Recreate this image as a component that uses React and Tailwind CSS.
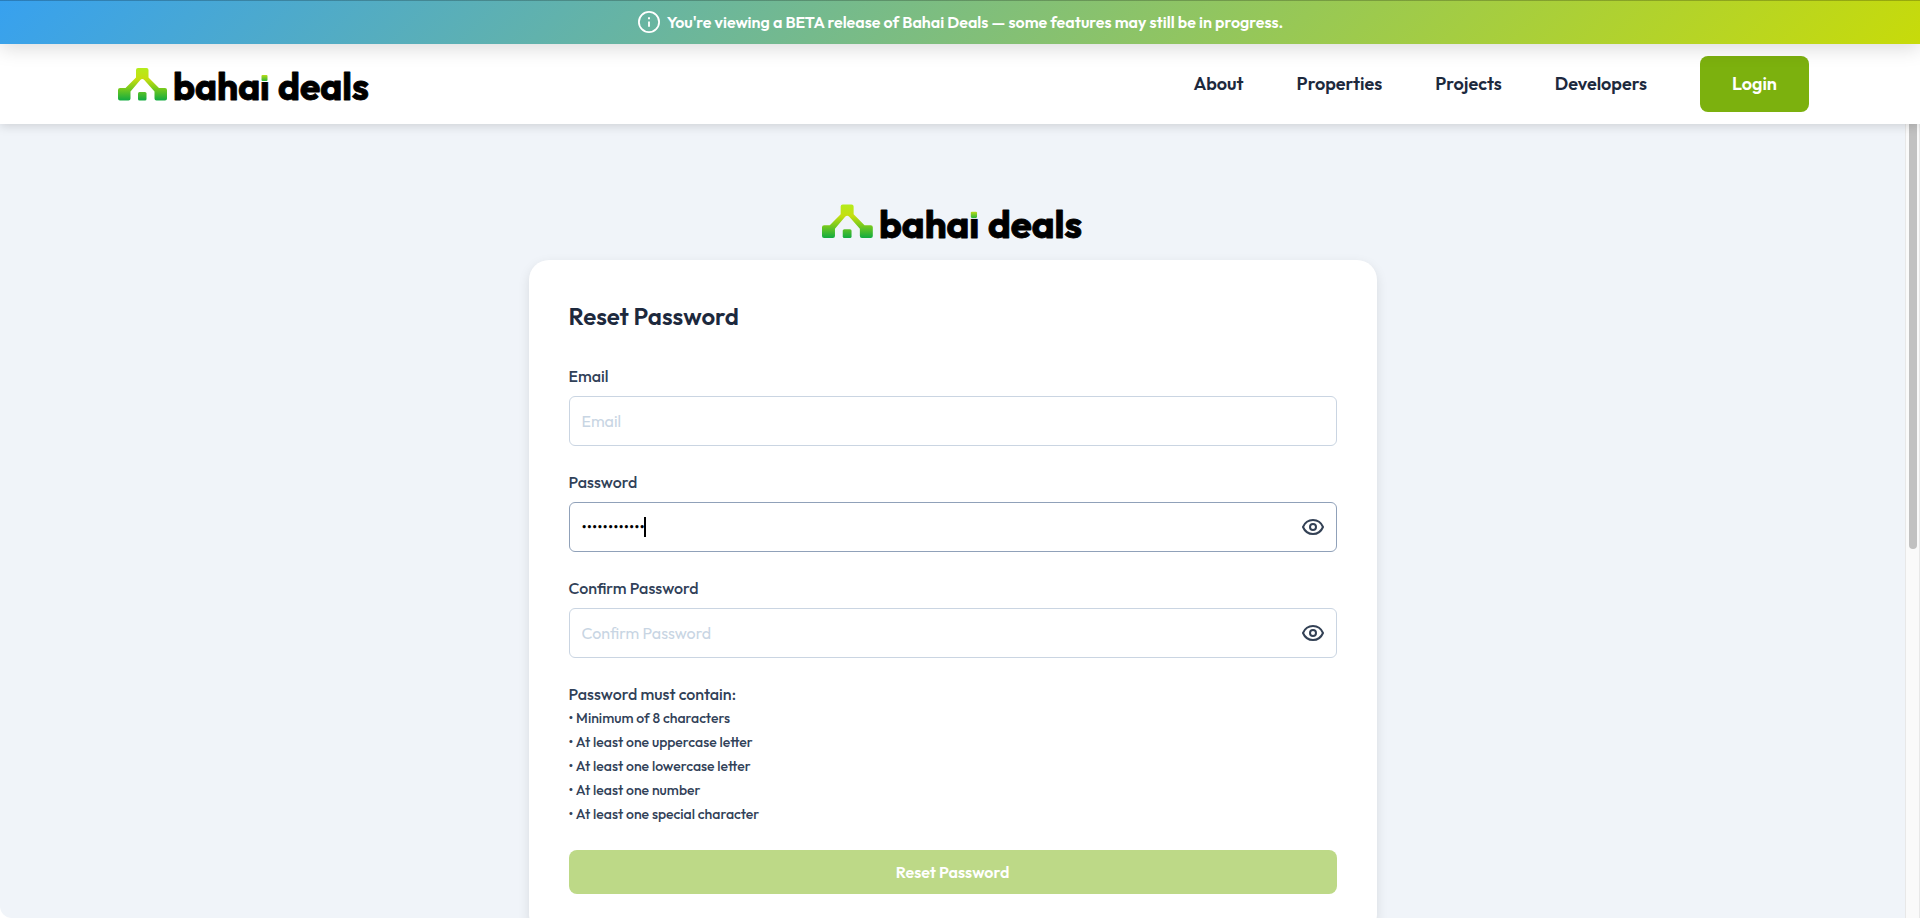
import { useState } from "react";

const requirements = [
  "Minimum of 8 characters",
  "At least one uppercase letter",
  "At least one lowercase letter",
  "At least one number",
  "At least one special character",
];

const links = ["About", "Properties", "Projects", "Developers"];

function Logo({ id, className }) {
  return (
    <svg viewBox="0 -9 252 54" className={className} role="img" aria-label="bahai deals">
      <defs>
        <linearGradient id={`${id}-mark`} gradientUnits="userSpaceOnUse" x1="0" y1="2" x2="0" y2="34">
          <stop offset="0" stopColor="#b4ec1c" />
          <stop offset="0.35" stopColor="#c6de10" />
          <stop offset="0.65" stopColor="#76c91d" />
          <stop offset="1" stopColor="#15ac40" />
        </linearGradient>
        <linearGradient id={`${id}-dot`} x1="0" y1="0" x2="0" y2="1">
          <stop offset="0" stopColor="#b9dc16" />
          <stop offset="1" stopColor="#2fb53a" />
        </linearGradient>
        <linearGradient id={`${id}-stem`} gradientUnits="userSpaceOnUse" x1="0" y1="15.5" x2="0" y2="16">
          <stop offset="0" stopColor="#000" stopOpacity="0" />
          <stop offset="1" stopColor="#000" />
        </linearGradient>
      </defs>
      <g fill={`url(#${id}-mark)`}>
        <path d="M20 2h8.500a2 2 0 0 1 2 2v7.500L41 22H47a2 2 0 0 1 2 2v8.500a2 2 0 0 1-2 2h-8.500a2 2 0 0 1-2-2v-7L26.300 14q-2-2-4 0L12.500 25.500v7a2 2 0 0 1-2 2H2a2 2 0 0 1-2-2V24a2 2 0 0 1 2-2h5.500L18 11.500V4a2 2 0 0 1 2-2z" />
        <rect x="20" y="26" width="8.500" height="8.500" rx="1.500" />
      </g>
      <g className="font-['Outfit',sans-serif] text-[37px] font-bold" stroke="#000" strokeWidth="0.8" strokeLinejoin="round">
        <text x="55" y="34">
          baha<tspan x="142" fill={`url(#${id}-stem)`} stroke={`url(#${id}-stem)`}>i</tspan>
        </text>
        <text x="160" y="34">deals</text>
      </g>
      <rect x="143.500" y="9" width="6" height="6" rx="1" fill={`url(#${id}-dot)`} />
    </svg>
  );
}

function InfoIcon() {
  return (
    <svg viewBox="0 0 24 24" className="size-6" fill="none" stroke="white" strokeWidth="1.8" aria-hidden="true">
      <circle cx="12" cy="12" r="10.1" />
      <path d="M12 11.500v5.300" />
      <path d="M12 7.300v1.900" strokeWidth="2" />
    </svg>
  );
}

function EyeIcon() {
  return (
    <svg viewBox="0 0 24 24" className="size-6" fill="none" stroke="#334155" strokeWidth="2" aria-hidden="true">
      <path d="M2 12C4 7.300 7.600 5 12 5s8 2.300 10 7c-2 4.700-5.600 7-10 7s-8-2.300-10-7z" strokeLinejoin="round" />
      <circle cx="12" cy="12" r="3" />
    </svg>
  );
}

function Field({ id, label, type = "text", value, onChange, placeholder, active, caret }) {
  const [shown, setShown] = useState(false);
  const secret = type === "password";
  return (
    <div className="flex flex-col gap-2">
      <label htmlFor={id} className="self-start text-base font-medium text-slate-700">{label}</label>
      <div className={`relative flex h-[50px] items-center rounded-md border pr-[11px] pl-3 ${active ? "border-slate-400" : "border-slate-300"}`}>
        <input
          id={id}
          type={secret && shown ? "text" : type}
          value={value}
          onChange={(e) => onChange(e.target.value)}
          placeholder={placeholder}
          className="min-w-0 flex-1 bg-transparent text-base text-black outline-none placeholder:text-[#c8d5e3]"
        />
        {caret && <span className="absolute left-[74px] h-5 w-0.5 bg-black" />}
        {secret && (
          <button type="button" aria-label={`Show ${label}`} onClick={() => setShown(!shown)}>
            <EyeIcon />
          </button>
        )}
      </div>
    </div>
  );
}

export default function App() {
  const [email, setEmail] = useState("");
  const [password, setPassword] = useState("abcdefgh1234");
  const [confirm, setConfirm] = useState("");

  return (
    <div className="flex h-screen flex-col overflow-hidden bg-white font-['Outfit','Lato',sans-serif]">
      <div className="z-20 flex h-11 shrink-0 items-center justify-center gap-1.5 bg-[linear-gradient(135deg,#37a1ef,#c7db0a)] text-base font-semibold text-white shadow-[0_4px_20px_rgba(0,0,0,0.15),inset_0_1px_0_rgba(0,0,0,0.22)]">
        <InfoIcon />
        <p>You're viewing a BETA release of Bahai Deals — some features may still be in progress.</p>
      </div>

      <header className="z-10 h-20 shrink-0 bg-white px-[111px] shadow-[0_2px_10px_rgba(0,0,0,0.15)]">
        <div className="flex h-full items-center justify-between">
          <a href="#home" className="pl-[7px]"><Logo id="nav" className="h-[54px]" /></a>
          <nav className="flex items-center gap-[53px] text-lg font-semibold text-slate-800">
            {links.map((link) => (
              <a key={link} href={`#${link.toLowerCase()}`}>{link}</a>
            ))}
            <a href="#login" className="rounded-lg bg-[#7cb10e] px-8 py-3.5 text-white">Login</a>
          </nav>
        </div>
      </header>

      <div className="flex min-h-0 flex-1">
        <main className="flex-1 overflow-hidden rounded-bl-xl bg-[#f0f4f9] pt-[69px]">
          <Logo id="card" className="mx-auto h-14" />
          <form
            onSubmit={(e) => e.preventDefault()}
            className="mx-auto mt-[11px] flex max-w-[848px] flex-col gap-6 rounded-[20px] bg-white p-10 shadow-[0_4px_12px_rgba(0,0,0,0.1)]"
          >
            <h1 className="mb-2 text-2xl font-semibold text-slate-800">Reset Password</h1>
            <Field id="email" label="Email" type="email" placeholder="Email" value={email} onChange={setEmail} />
            <Field id="password" label="Password" type="password" placeholder="Password" value={password} onChange={setPassword} active caret />
            <Field id="confirm" label="Confirm Password" type="password" placeholder="Confirm Password" value={confirm} onChange={setConfirm} />
            <div className="text-slate-700">
              <p className="text-base font-medium">Password must contain:</p>
              <ul className="text-sm leading-6 font-medium">
                {requirements.map((text) => (
                  <li key={text}>• {text}</li>
                ))}
              </ul>
            </div>
            <button type="submit" className="h-11 rounded-lg bg-[#bdd987] text-base font-semibold text-white">
              Reset Password
            </button>
          </form>
        </main>
        <div className="w-[15px] border-x border-[#e8e8e8] bg-[#fafafa] pl-[3px]" aria-hidden="true">
          <div className="h-[425px] w-2 rounded-b-full bg-[#c1c1c1]" />
        </div>
      </div>
    </div>
  );
}
